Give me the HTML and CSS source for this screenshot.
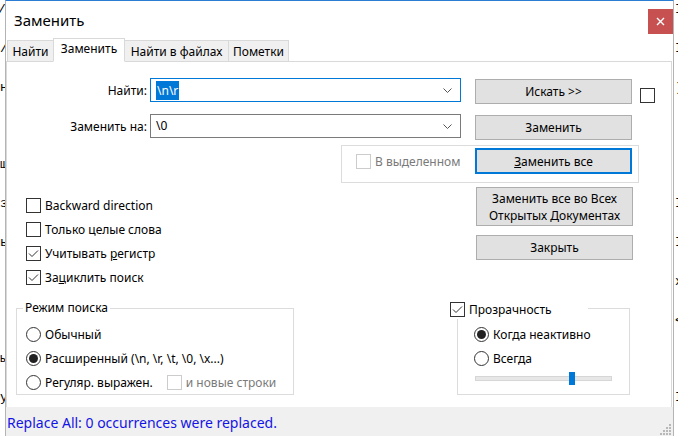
FILE: index.html
```html
<!DOCTYPE html>
<html lang="ru">
<head>
<meta charset="utf-8">
<title>Заменить</title>
<link rel="stylesheet" href="styles.css">
</head>
<body>
<div class="screen">
<pre class="editor-edge editor-left">/

/

н:



ш

з

ь





ы

у</pre>
  <div class="window">
    <div class="titlebar">
      <span class="title">Заменить</span>
      <span class="close"><svg width="9" height="9" viewBox="0 0 9 9"><path d="M1 1 L8 8 M8 1 L1 8" stroke="#fff" stroke-width="1.4" fill="none"/></svg></span>
    </div>
    <div class="tabs">
      <div class="tab tab-find">Найти</div>
      <div class="tab tab-replace active">Заменить</div>
      <div class="tab tab-files">Найти в файлах</div>
      <div class="tab tab-mark">Пометки</div>
    </div>
    <div class="panel">
      <div class="field-row row-find">
        <span class="field-label">Найти:</span>
        <div class="combo focused"><span class="combo-text"><span class="sel">\n\r</span></span><svg class="chevron" width="9" height="5" viewBox="0 0 9 5"><path d="M0.5 0.5 L4.5 4.5 L8.5 0.5" stroke="#555" stroke-width="1" fill="none"/></svg></div>
        <button class="btn">Искать &gt;&gt;</button>
        <span class="check row-check"></span>
      </div>
      <div class="field-row row-replace">
        <span class="field-label">Заменить на:</span>
        <div class="combo"><span class="combo-text">\0</span><svg class="chevron" width="9" height="5" viewBox="0 0 9 5"><path d="M0.5 0.5 L4.5 4.5 L8.5 0.5" stroke="#555" stroke-width="1" fill="none"/></svg></div>
        <button class="btn">Заменить</button>
      </div>
      <div class="selection-group">
        <label class="option disabled"><span class="check"></span>В выделенном</label>
        <button class="btn default"><span><u>З</u>аменить все</span></button>
      </div>
      <div class="middle">
        <div class="options">
          <label class="option"><span class="check"></span>Backward direction</label>
          <label class="option"><span class="check"></span>Только целые слова</label>
          <label class="option"><span class="check"><svg width="13" height="13" viewBox="0 0 13 13"><path d="M2 6.5 L5 9.5 L11 3.5" stroke="#333" stroke-width="1" fill="none"/></svg></span>Учитывать&nbsp;<u>р</u>егистр</label>
          <label class="option"><span class="check"><svg width="13" height="13" viewBox="0 0 13 13"><path d="M2 6.5 L5 9.5 L11 3.5" stroke="#333" stroke-width="1" fill="none"/></svg></span>За<u>ц</u>иклить поиск</label>
        </div>
        <div class="actions">
          <button class="btn tall"><span>Заменить все во Всех<br>Открытых <u>Д</u>окументах</span></button>
          <button class="btn close-btn">Закрыть</button>
        </div>
      </div>
      <div class="bottom">
        <fieldset class="mode">
          <legend>Режим поиска</legend>
          <label class="option"><span class="radio"></span>Обычный</label>
          <label class="option"><span class="radio on"></span>Расширенный (\n, \r, \t, \0, \x...)</label>
          <div class="option-line">
            <label class="option"><span class="radio"></span>Регуляр. выражен.</label>
            <label class="option disabled newline"><span class="check"></span>и новые строки</label>
          </div>
        </fieldset>
        <div class="transparency">
          <div class="trans-box">
            <label class="option"><span class="radio on"></span>Когда неактивно</label>
            <label class="option"><span class="radio"></span>Всегда</label>
            <div class="slider"><span class="thumb"></span></div>
          </div>
          <label class="option trans-toggle"><span class="check"><svg width="13" height="13" viewBox="0 0 13 13"><path d="M2 6.5 L5 9.5 L11 3.5" stroke="#333" stroke-width="1" fill="none"/></svg></span>Прозрачность</label>
        </div>
      </div>
    </div>
    <div class="status">
      <span class="status-text">Replace All: 0 occurrences were replaced.</span>
      <svg class="grip" width="12" height="12" viewBox="0 0 12 12"><g fill="#b8b8b8"><rect x="9" y="0" width="2" height="2"/><rect x="6" y="3" width="2" height="2"/><rect x="9" y="3" width="2" height="2"/><rect x="3" y="6" width="2" height="2"/><rect x="6" y="6" width="2" height="2"/><rect x="9" y="6" width="2" height="2"/><rect x="0" y="9" width="2" height="2"/><rect x="3" y="9" width="2" height="2"/><rect x="6" y="9" width="2" height="2"/><rect x="9" y="9" width="2" height="2"/></g></svg>
    </div>
  </div>
<pre class="editor-edge editor-right">I

I

)





I

I

x

&lt;



I</pre>
</div>
</body>
</html>
```
FILE: styles.css
```css
* { box-sizing: border-box; }
html, body { margin: 0; padding: 0; }
body {
  width: 678px;
  height: 436px;
  overflow: hidden;
  background: #fff;
  font-family: "Noto Sans", "DejaVu Sans", sans-serif;
  font-size: 12px;
  color: #000;
}
.screen {
  display: grid;
  grid-template-columns: 5px 669px 4px;
  height: 436px;
}
.editor-edge {
  margin: 0;
  overflow: hidden;
  font-family: "Liberation Mono", monospace;
  font-size: 13px;
  line-height: 19.4px;
  color: #000;
  background: #fff;
  white-space: pre;
}
.editor-left { padding-left: 0; text-indent: -2px; }
.editor-right { padding-left: 1px; }

.window {
  height: 436px;
  display: flex;
  flex-direction: column;
  overflow: hidden;
  background: #fff;
  border-top: 1px solid #2b7cd3;
  border-left: 1px solid #b4b4b4;
  border-right: 1px solid #b4b4b4;
}
.titlebar {
  height: 37px;
  flex: none;
  display: flex;
  align-items: flex-start;
}
.title {
  padding-left: 8px;
  margin-top: 9px;
  font-size: 15px;
  line-height: 20px;
}
.close {
  margin-left: auto;
  margin-top: 8px;
  width: 25px;
  height: 25px;
  background: #c75050;
  display: flex;
  align-items: center;
  justify-content: center;
}

.tabs {
  flex: none;
  height: 24px;
  display: flex;
  align-items: flex-end;
  padding-left: 1px;
  margin-bottom: -1px;
}
.tab {
  height: 22px;
  border: 1px solid #d9d9d9;
  background: #f0f0f0;
  display: flex;
  align-items: center;
  justify-content: center;
  margin-left: -1px;
  white-space: nowrap;
}
.tab-find { width: 47px; margin-left: 0; }
.tab-replace { width: 72px; }
.tab-files { width: 105px; }
.tab-mark { width: 61px; }
.tab.active {
  height: 24px;
  background: #fff;
  border-bottom-color: #fff;
  position: relative;
  z-index: 1;
  padding-bottom: 3px;
}

.panel {
  flex: none;
  height: 346px;
  border: 1px solid #d9d9d9;
  border-bottom: 0;
  margin-right: 1px;
  background: #fff;
}

.field-row {
  display: flex;
  align-items: flex-start;
  height: 25px;
}
.row-find { margin-top: 17px; }
.row-replace { margin-top: 11px; }
.field-label {
  width: 140px;
  text-align: right;
  line-height: 24px;
  white-space: nowrap;
}
.combo {
  margin-left: 3px;
  margin-top: -1px;
  width: 311px;
  height: 24px;
  border: 1px solid #7a7a7a;
  display: flex;
  align-items: center;
  padding-left: 5px;
  padding-right: 8px;
  background: #fff;
}
.combo.focused { border-color: #0078d7; }
.combo-text { flex: 1; line-height: 18px; }
.sel {
  background: #0078d7;
  color: #fff;
  display: inline-block;
  padding: 0 1px;
  line-height: 19px;
}
.chevron { flex: none; }

.btn {
  font: inherit;
  color: #000;
  width: 157px;
  height: 25px;
  padding: 0;
  margin: 0;
  background: #e1e1e1;
  border: 1px solid #adadad;
  display: flex;
  align-items: center;
  justify-content: center;
  text-align: center;
  flex: none;
}
.field-row .btn { margin-left: 14px; }
.btn.default {
  border: 2px solid #0078d7;
  height: 26px;
}
.btn.tall {
  height: 39px;
  line-height: 17px;
}
.close-btn { margin-top: 9px; }

.check {
  width: 15px;
  height: 15px;
  border: 1px solid #333;
  background: #fff;
  margin-right: 4px;
  flex: none;
  display: flex;
  align-items: center;
  justify-content: center;
}
.row-check { margin-left: 8px; margin-top: 9px; }

.radio {
  width: 15px;
  height: 15px;
  border: 1px solid #333;
  border-radius: 50%;
  margin-right: 4px;
  flex: none;
  display: flex;
  align-items: center;
  justify-content: center;
  background: #fff;
}
.radio.on::after {
  content: "";
  width: 9px;
  height: 9px;
  border-radius: 50%;
  background: #222;
}

.option {
  display: flex;
  align-items: center;
  height: 24px;
  white-space: nowrap;
}
.option.disabled { color: #7a7a7a; }
.option.disabled .check { border-color: #cccccc; }

.selection-group {
  margin-top: 5px;
  margin-left: 334px;
  width: 298px;
  height: 38px;
  border: 1px solid #dcdcdc;
  display: flex;
  align-items: flex-start;
  padding-top: 2px;
}
.selection-group .option { height: 26px; margin-left: 14px; }
.selection-group .btn { margin-left: auto; margin-right: 6px; }

.middle {
  display: flex;
  align-items: flex-start;
  margin-top: 4px;
}
.options {
  margin-left: 19px;
  margin-top: 6px;
}
.actions {
  margin-left: auto;
  margin-right: 38px;
  width: 157px;
}

.bottom {
  display: flex;
  align-items: flex-start;
  margin-top: 11px;
}
.mode {
  margin: 0 0 0 9px;
  width: 278px;
  border: 1px solid #dcdcdc;
  padding: 6px 0 0 9px;
  min-width: 0;
}
.mode legend {
  padding: 0 2px;
  margin-left: -3px;
  line-height: 16px;
}
.option-line {
  display: flex;
  align-items: center;
}
.newline { margin-left: 14px; }

.transparency {
  position: relative;
  margin-left: 163px;
}
.trans-box {
  margin-top: 8px;
  width: 173px;
  height: 87px;
  border: 1px solid #dcdcdc;
  padding: 13px 0 0 16px;
}
.trans-toggle {
  position: absolute;
  top: 0;
  left: -7px;
  width: 138px;
  height: 19px;
  background: #fff;
}
.slider {
  position: relative;
  margin-top: 6px;
  margin-left: 1px;
  width: 137px;
  height: 5px;
  background: #e7e7e7;
  border: 1px solid #d6d6d6;
}
.thumb {
  position: absolute;
  left: 93px;
  top: -5px;
  width: 6px;
  height: 13px;
  background: #0078d7;
}

.status {
  flex: 1;
  position: relative;
  background: #f0f0f0;
  display: flex;
  align-items: flex-start;
  padding-left: 1px;
}
.status-text {
  color: #1414e6;
  font-size: 14px;
  line-height: 20px;
  margin-top: 6px;
}
.grip {
  position: absolute;
  right: 1px;
  top: 17px;
}
```
